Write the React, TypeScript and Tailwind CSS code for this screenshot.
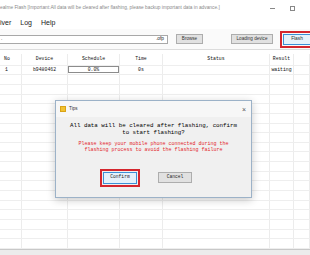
import React from 'react';

const cols = ['w-[22px]', 'w-[46px]', 'w-[52px]', 'w-[43px]', 'w-[107px]', 'w-[24px]', 'flex-1'];

const Cells: React.FC<{ items: React.ReactNode[]; h: string }> = ({ items, h }) => (
  <div className={`flex ${h} border-b border-[#eeeeee]`}>
    {cols.map((c, i) => (
      <div
        key={i}
        className={`${c} shrink-0 border-r border-[#ececec] flex items-center ${i === 0 ? 'justify-start pl-[4px]' : 'justify-center'}`}
      >
        {items[i]}
      </div>
    ))}
  </div>
);

export default function App() {
  const emptyRows = Array.from({ length: 18 });

  return (
    <div className="w-[310px] h-[255px] overflow-hidden relative bg-white flex flex-col font-['Liberation_Sans',sans-serif] text-[#222]">
      {/* title bar, window scrolled off to the left */}
      <div className="h-[16px] shrink-0 flex items-center justify-between bg-white">
        <span className="text-[4.8px] text-[#8a8a8a] whitespace-nowrap leading-none">
          ealme Flash [Important:All data will be cleared after flashing, please backup important data in advance.]
        </span>
        <div className="flex items-center gap-[15px] pr-[15px]">
          <span className="block w-[5px] h-px bg-[#888]" />
          <span className="block w-[5px] h-[5px] border border-[#888]" />
        </div>
      </div>

      {/* menu */}
      <div className="h-[13px] shrink-0 flex items-center gap-[9px] text-[7px] text-[#222] leading-none bg-white">
        <span>iver</span>
        <span>Log</span>
        <span>Help</span>
      </div>

      {/* toolbar */}
      <div className="h-[21px] shrink-0 flex items-center bg-[#fafafa] border-b border-[#dcdcdc]">
        <div className="w-[169px] h-[9px] -ml-px bg-white border border-[#a8a8a8] flex items-center justify-between pl-[1px] pr-[3px] text-[4.8px] leading-none">
          <span>.</span>
          <span>.ofp</span>
        </div>
        <button className="ml-[8px] w-[27px] h-[10px] bg-[#e1e1e1] border border-[#adadad] text-[4.6px] leading-none text-[#333]">
          Browse
        </button>
        <button className="ml-[28px] w-[42px] h-[10px] bg-[#e1e1e1] border border-[#adadad] text-[4.6px] leading-none text-[#333]">
          Loading device
        </button>
        <div className="ml-[7px] flex-1 h-[17px] border-2 border-r-0 border-[#d4262e] pl-[1px] py-[1px] flex">
          <button className="flex-1 bg-[#e5f1fb] border border-[#3c8fd6] border-r-0 text-[4.8px] leading-none text-[#333]">
            Flash
          </button>
        </div>
      </div>

      {/* table */}
      <div className="flex-1 flex flex-col font-['Liberation_Mono',monospace] text-[4.8px] leading-none text-[#111] pt-[4px] overflow-hidden">
        <Cells h="h-[12px]" items={['No', 'Device', 'Schedule', 'Time', 'Status', 'Result', '']} />
        <div className="flex h-[10px] border-b border-[#eeeeee]">
          <div className="w-[22px] shrink-0 border-r border-[#ececec] flex items-center pl-[5px]">1</div>
          <div className="w-[46px] shrink-0 border-r border-[#ececec] flex items-center justify-center">b9480462</div>
          <div className="w-[52px] shrink-0 border-r border-[#ececec] flex items-center justify-center">
            <div className="w-[51px] h-[7px] border border-[#8c8c8c] bg-white flex items-center justify-center">0.0%</div>
          </div>
          <div className="w-[43px] shrink-0 border-r border-[#ececec] flex items-center justify-center">0s</div>
          <div className="w-[107px] shrink-0 border-r border-[#ececec]" />
          <div className="w-[24px] shrink-0 border-r border-[#ececec] flex items-center justify-center">waiting</div>
          <div className="flex-1 border-r border-[#ececec]" />
        </div>
        {emptyRows.map((_, i) => (
          <Cells key={i} h="h-[10px]" items={[]} />
        ))}
      </div>

      {/* status bar */}
      <div className="h-[6px] shrink-0 bg-[#ececec] border-t border-[#c8c8c8]" />

      {/* Tips dialog */}
      <div className="absolute left-[55px] top-[100px] w-[197px] h-[98px] bg-[#f0f0f0] border border-[#9cb2c8] shadow-[0_2px_8px_rgba(0,0,0,0.22)] flex flex-col">
        <div className="h-[16px] shrink-0 bg-[#f7f7f7] flex items-center justify-between pl-[4px] pr-[5px]">
          <div className="flex items-center gap-[3px]">
            <span className="block w-[6px] h-[6px] bg-[#f2c230] border border-[#d9a316]" />
            <span className="text-[4.6px] leading-none text-[#333]">Tips</span>
          </div>
          <span className="text-[7px] leading-none text-[#555]">×</span>
        </div>
        <div className="flex flex-col items-center pt-[5px] font-['Liberation_Mono',monospace] whitespace-nowrap">
          <div className="text-[5.8px] leading-[7px] text-[#000] text-center">
            <div>All data will be cleared after flashing, confirm</div>
            <div>to start flashing?</div>
          </div>
          <div className="mt-[4.5px] text-[5px] leading-[6.5px] text-[#e3262b] text-center">
            <div>Please keep your mobile phone connected during the</div>
            <div>flashing process to avoid the flashing failure</div>
          </div>
        </div>
        <div className="flex items-center pl-[44px] mt-[15px]">
          <div className="flex border-2 border-[#d4262e] p-[1px]">
            <button className="w-[34px] h-[12px] bg-[#e5f1fb] border border-[#3c8fd6] font-['Liberation_Mono',monospace] text-[4.6px] leading-none text-[#222]">
              Confirm
            </button>
          </div>
          <button className="ml-[18px] w-[34px] h-[11px] bg-[#e1e1e1] border border-[#adadad] font-['Liberation_Mono',monospace] text-[4.6px] leading-none text-[#222]">
            Cancel
          </button>
        </div>
      </div>
    </div>
  );
}
